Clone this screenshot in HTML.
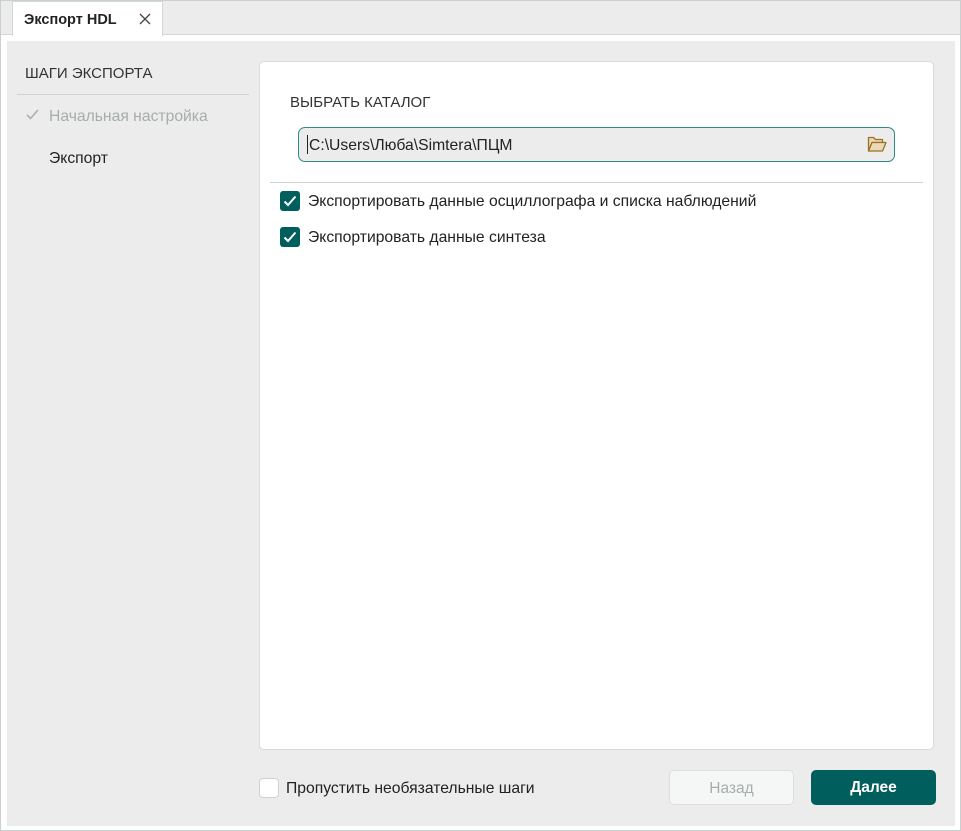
<!DOCTYPE html>
<html><head><meta charset="utf-8"><style>
*{box-sizing:border-box;margin:0;padding:0}
body{width:961px;height:831px;background:#fff;font-family:"Liberation Sans",sans-serif;position:relative;overflow:hidden;color:#222}
.frame{position:absolute;left:0;top:0;width:961px;height:831px;border:1px solid #c9d1d0;z-index:5;pointer-events:none}
.tabbar{position:absolute;left:0;top:0;width:961px;height:35px;background:#ebeceb;border-bottom:1px solid #d3d8d7}
.tab{position:absolute;left:12px;top:1px;width:151px;height:35px;background:#fff;border:1px solid #d3d8d7;border-bottom:none}
.tab span{position:absolute;left:11px;top:10px;font-weight:bold;font-size:14.5px;color:#222}
.panel{position:absolute;left:7px;top:41px;width:948px;height:785px;background:#ebeceb}
.abs{position:absolute;white-space:nowrap}
.card{position:absolute;left:259px;top:61px;width:675px;height:689px;background:#fff;border:1px solid #d6dcdb;border-radius:5px}
.cb{position:absolute;width:20px;height:20px;background:#005f5c;border-radius:3px}
.btn{position:absolute;top:770px;height:35px;border-radius:5px;font-size:15.5px;text-align:center;line-height:36px}
.t{font-size:15.7px}
</style></head><body>
<div class="frame"></div>
<div class="tabbar"><div class="tab"><span>Экспорт HDL</span>
<svg style="position:absolute;left:126px;top:11px" width="12" height="12" viewBox="0 0 12 12"><path d="M1 1L11 11M11 1L1 11" stroke="#444" stroke-width="1.3"/></svg></div></div>
<div class="panel"></div>
<div class="abs" style="left:25px;top:65px;font-size:15px;color:#333">ШАГИ ЭКСПОРТА</div>
<div class="abs" style="left:17px;top:94px;width:232px;height:1px;background:#ccd3d2"></div>
<svg class="abs" style="left:26px;top:109px" width="13" height="11" viewBox="0 0 13 11"><path d="M1 6L4.5 9.5L12 1" stroke="#aab0b0" stroke-width="1.6" fill="none"/></svg>
<div class="abs t" style="left:49px;top:108px;color:#a7acac">Начальная настройка</div>
<div class="abs t" style="left:49px;top:150px;color:#222">Экспорт</div>
<div class="card"></div>
<div class="abs" style="left:290px;top:94px;font-size:15px;color:#333">ВЫБРАТЬ КАТАЛОГ</div>
<div class="abs" style="left:298px;top:127px;width:597px;height:35px;background:#ebeceb;border:1px solid #2d8a86;border-radius:7px"></div>
<div class="abs" style="left:307px;top:135px;width:1px;height:19px;background:#222"></div>
<div class="abs t" style="left:309px;top:137px;color:#222">C:\Users\Люба\Simtera\ПЦМ</div>
<svg class="abs" style="left:867px;top:135px" width="20" height="18" viewBox="0 0 20 18"><path d="M1.5 2.5h5l2 2h7v3H5L1.5 16z" fill="#ead8b6" stroke="#9a7222" stroke-width="1.3" stroke-linejoin="round"/><path d="M1.5 16L5 7.5h14L15.5 16z" fill="#ead8b6" stroke="#9a7222" stroke-width="1.3" stroke-linejoin="round"/></svg>
<div class="abs" style="left:270px;top:182px;width:653px;height:1px;background:#ccd3d2"></div>
<div class="cb" style="left:280px;top:191px"></div>
<svg class="abs" style="left:283px;top:195px" width="14" height="12" viewBox="0 0 14 12"><path d="M1.5 6.5L5 10L12.5 1.5" stroke="#fff" stroke-width="2" fill="none"/></svg>
<div class="abs t" style="left:308px;top:193px">Экспортировать данные осциллографа и списка наблюдений</div>
<div class="cb" style="left:280px;top:227px"></div>
<svg class="abs" style="left:283px;top:231px" width="14" height="12" viewBox="0 0 14 12"><path d="M1.5 6.5L5 10L12.5 1.5" stroke="#fff" stroke-width="2" fill="none"/></svg>
<div class="abs t" style="left:308px;top:229px">Экспортировать данные синтеза</div>
<div class="abs" style="left:259px;top:778px;width:20px;height:20px;background:#fff;border:1px solid #ccd3d2;border-radius:4px"></div>
<div class="abs t" style="left:286px;top:780px">Пропустить необязательные шаги</div>
<div class="btn" style="left:669px;width:125px;background:#f5f6f6;border:1px solid #dbe0df;color:#a8adad">Назад</div>
<div class="btn" style="left:811px;width:125px;background:#005f5c;color:#fff;font-weight:bold">Далее</div>
</body></html>
